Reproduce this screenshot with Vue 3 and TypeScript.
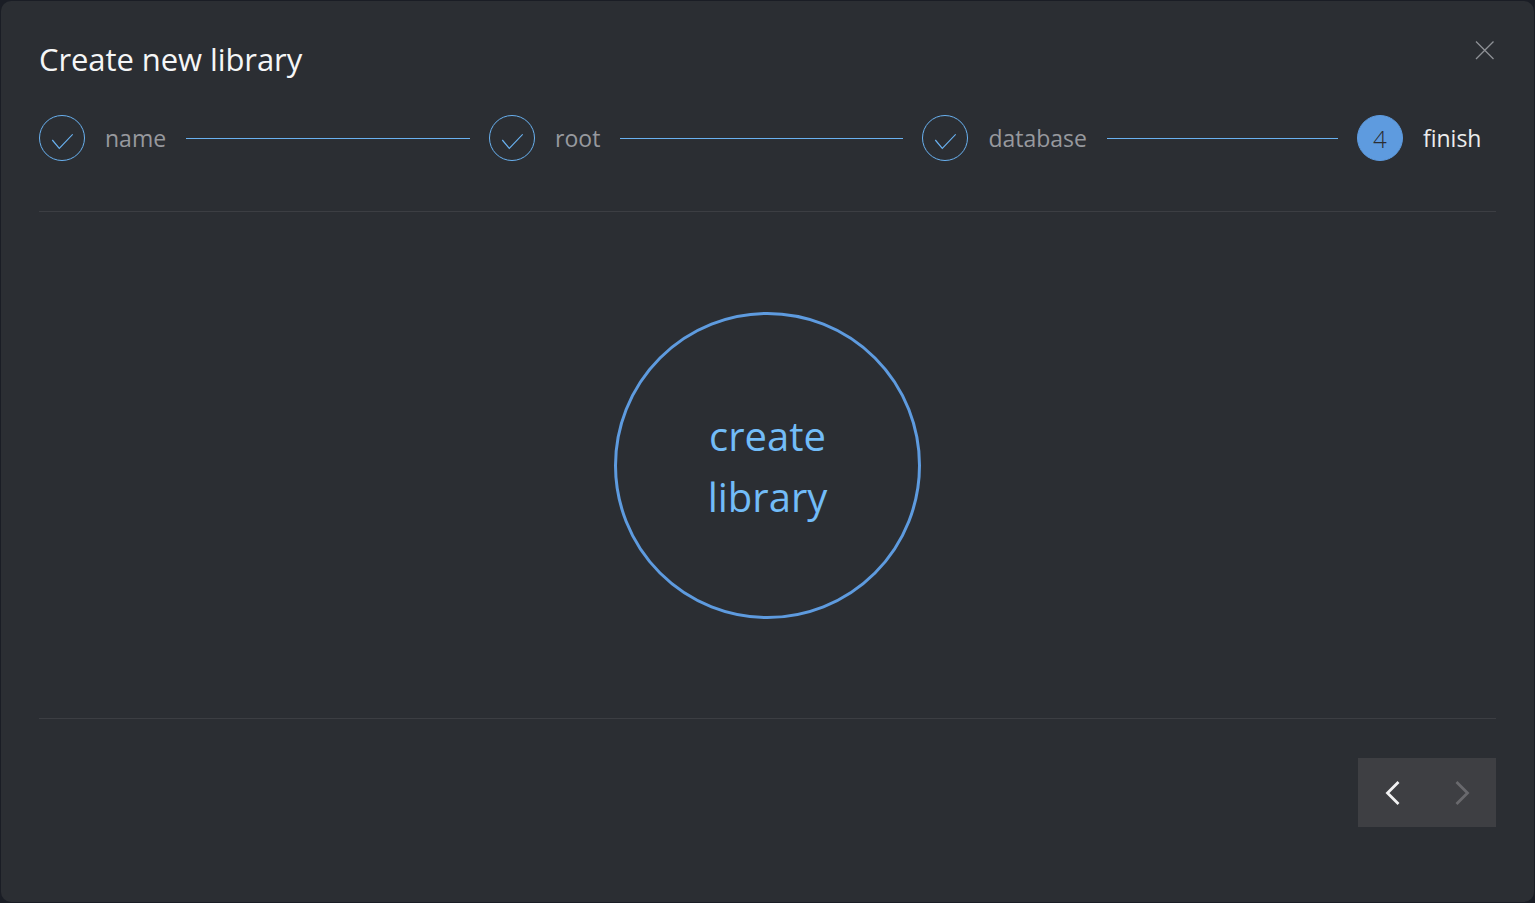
<script setup lang="ts">
interface Step {
  label: string
  line: number
}
const steps: Step[] = [
  { label: 'name', line: 284 },
  { label: 'root', line: 283 },
  { label: 'database', line: 231 },
]
</script>

<template>
  <div class="screen">
    <section class="dialog">
      <button class="close" aria-label="close">
        <svg width="20" height="20" viewBox="0 0 20 20">
          <path d="M1 1.5 18.5 19M18.5 1.5 1 19" stroke="#8e9196" stroke-width="1.3" fill="none" />
        </svg>
      </button>
      <h1 class="title">Create new library</h1>
      <div class="steps">
        <template v-for="step in steps" :key="step.label">
          <div class="step">
            <span class="dot">
              <svg width="22" height="17" viewBox="0 0 22 17">
                <path d="M1.3 7 8.3 15.3 21.7 1.3" stroke="#69b1f0" stroke-width="1.2" fill="none" />
              </svg>
            </span>
            <span class="label">{{ step.label }}</span>
          </div>
          <div class="line" :style="{ width: step.line + 'px' }"></div>
        </template>
        <div class="step">
          <span class="dot current">4</span>
          <span class="label active">finish</span>
        </div>
      </div>
      <div class="body">
        <button class="create">create<br />library</button>
      </div>
      <div class="footer">
        <div class="nav">
          <button class="nav-btn" aria-label="previous">
            <svg width="16" height="26" viewBox="0 0 16 26">
              <path d="M13.5 2 2.5 13 13.5 24" stroke="#f2f2f3" stroke-width="2.8" fill="none" />
            </svg>
          </button>
          <button class="nav-btn" aria-label="next">
            <svg width="16" height="26" viewBox="0 0 16 26">
              <path d="M2.5 2 13.5 13 2.5 24" stroke="#69696d" stroke-width="2.8" fill="none" />
            </svg>
          </button>
        </div>
      </div>
    </section>
  </div>
</template>

<style>
html,
body {
  margin: 0;
  background: #1a1d25;
}
</style>

<style scoped>
.screen {
  height: 903px;
  padding: 1px;
  box-sizing: border-box;
  overflow: hidden;
  font-family: "Open Sans", "Noto Sans", sans-serif;
}
.dialog {
  position: relative;
  height: 901px;
  box-sizing: border-box;
  padding: 0 38px;
  background: #2b2e33;
  border-radius: 10px;
}
.close {
  position: absolute;
  top: 39px;
  right: 39px;
  width: 20px;
  height: 20px;
  padding: 0;
  border: 0;
  background: none;
  display: flex;
}
.title {
  margin: 0;
  padding-top: 36px;
  font-size: 31px;
  line-height: 44px;
  font-weight: 400;
  letter-spacing: -0.08px;
  color: #f5f6f7;
}
.steps {
  display: flex;
  align-items: center;
  margin-top: 34px;
  height: 46px;
}
.step {
  display: flex;
  align-items: center;
  gap: 20px;
}
.dot {
  width: 46px;
  height: 46px;
  box-sizing: border-box;
  border-radius: 50%;
  border: 1px solid #69b1f0;
  display: flex;
  align-items: center;
  justify-content: center;
  padding-top: 7px;
}
.dot.current {
  background: #5e9bdf;
  border-color: #5e9bdf;
  color: #2b2e33;
  font-size: 24px;
  font-weight: 300;
  padding-top: 0;
}
.label {
  font-size: 23px;
  line-height: 46px;
  color: #97999e;
}
.label.active {
  color: #eceded;
}
.line {
  height: 1px;
  margin: 0 19px 0 20px;
  background: #69b1f0;
}
.body {
  margin-top: 50px;
  height: 508px;
  box-sizing: border-box;
  border-top: 1px solid #3c3e43;
  border-bottom: 1px solid #3c3e43;
  display: flex;
  align-items: center;
  justify-content: center;
}
.create {
  width: 307px;
  height: 307px;
  border-radius: 50%;
  border: 3px solid #5e9bdf;
  background: none;
  padding: 2px 0 0;
  font-family: inherit;
  font-size: 40px;
  line-height: 61px;
  color: #72bcf8;
}
.footer {
  display: flex;
  justify-content: flex-end;
  padding-top: 39px;
}
.nav {
  display: flex;
  width: 138px;
  height: 69px;
  background: #3e3f43;
}
.nav-btn {
  flex: 1;
  border: 0;
  padding: 0;
  background: none;
  display: flex;
  align-items: center;
  justify-content: center;
}
</style>
